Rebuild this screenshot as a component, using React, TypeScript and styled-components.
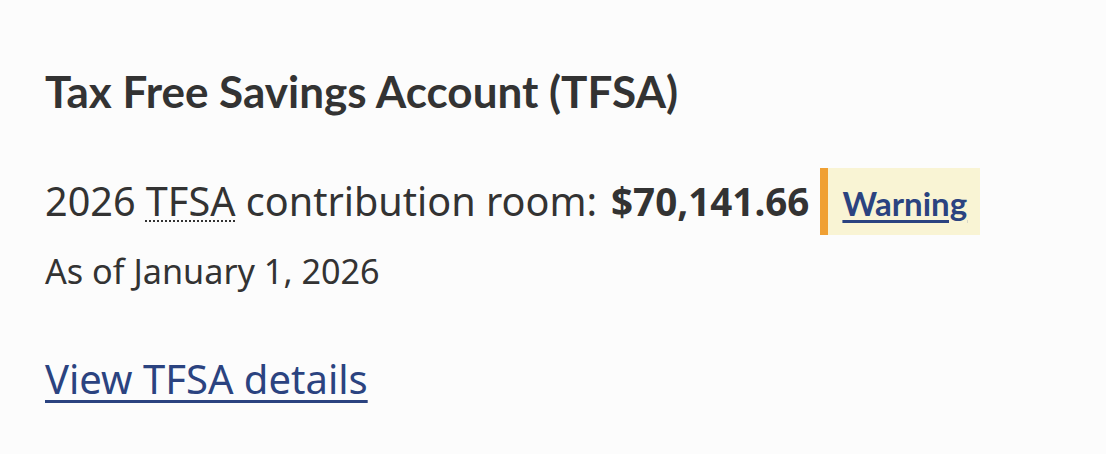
import React from 'react'
import styled, { createGlobalStyle } from 'styled-components'

const GlobalStyle = createGlobalStyle`
  html, body {
    margin: 0;
    padding: 0;
    background: #fcfcfc;
  }
  body {
    font-family: 'Noto Sans', sans-serif;
    color: #333;
  }
`

const Section = styled.section`
  padding: 65px 45px 0;
`

const Heading = styled.h2`
  margin: 0;
  font-family: Lato, 'Noto Sans', sans-serif;
  font-weight: 700;
  font-size: 44px;
  line-height: 52px;
  color: #333;
`

const RoomRow = styled.div`
  display: flex;
  align-items: center;
  margin-top: 51px;
  font-size: 39.6px;
  line-height: 53px;
`

const Abbr = styled.abbr`
  text-decoration: underline dotted #333;
  text-decoration-thickness: 2px;
  text-underline-offset: 4px;
  cursor: help;
`

const Amount = styled.strong`
  font-weight: 700;
  font-size: 38.6px;
  margin-left: 14px;
`

const Notice = styled.div`
  display: flex;
  align-items: center;
  height: 67px;
  margin-left: 11px;
  padding: 3px 13px 0 14px;
  background: #f9f4d4;
  border-left: 8px solid #f0a033;
  box-sizing: border-box;
`

const NoticeLink = styled.a`
  font-family: Lato, 'Noto Sans', sans-serif;
  font-weight: 700;
  font-size: 33px;
  color: #2b4380;
  text-decoration: underline;
  text-decoration-thickness: 3px;
  text-underline-offset: 4px;
`

const Asof = styled.p`
  margin: 14px 0 0;
  font-size: 34.2px;
  line-height: 44px;
`

const DetailsLink = styled.a`
  display: inline-block;
  margin-top: 59px;
  font-size: 40px;
  line-height: 54px;
  color: #2b4380;
  text-decoration: underline;
  text-decoration-thickness: 3px;
  text-underline-offset: 6px;
`

export default function App() {
  return (
    <>
      <GlobalStyle />
      <Section>
        <Heading>Tax Free Savings Account (TFSA)</Heading>
        <RoomRow>
          <span>
            2026 <Abbr title="Tax Free Savings Account">TFSA</Abbr> contribution room:
          </span>
          <Amount>$70,141.66</Amount>
          <Notice>
            <NoticeLink href="#">Warning</NoticeLink>
          </Notice>
        </RoomRow>
        <Asof>As of January 1, 2026</Asof>
        <DetailsLink href="#">View TFSA details</DetailsLink>
      </Section>
    </>
  )
}
